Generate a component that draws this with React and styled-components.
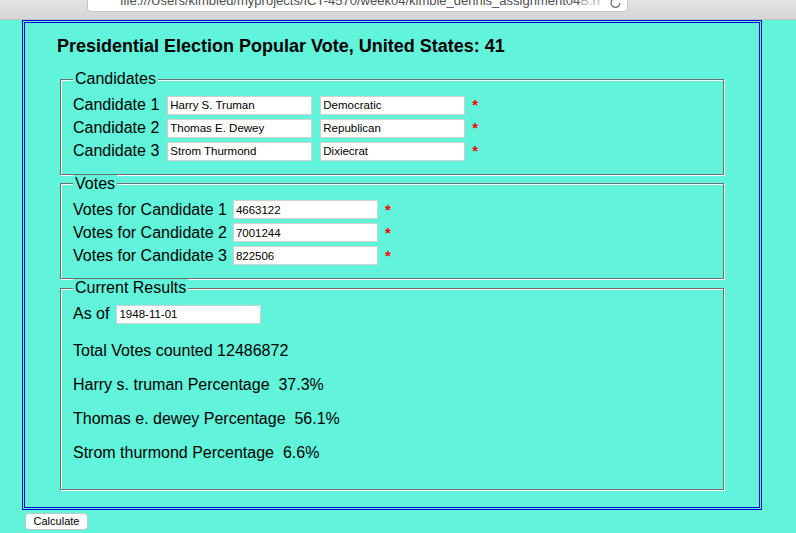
import React from 'react'
import styled, { createGlobalStyle } from 'styled-components'

const aqua = '#62f4da'

const GlobalStyle = createGlobalStyle`
  html, body {
    margin: 0;
    padding: 0;
    background: ${aqua};
  }
  body {
    font-family: "Liberation Sans", Arial, sans-serif;
    color: #000;
  }
`

const BrowserBar = styled.div`
  height: 19px;
  border-bottom: 1px solid #c2c2c2;
  background: linear-gradient(#e3e3e3, #d5d5d5);
  display: flex;
`

const UrlField = styled.div`
  margin-left: 87px;
  width: 541px;
  height: 12px;
  box-sizing: border-box;
  background: #fff;
  border: 1px solid #c6c6c6;
  border-top: none;
  border-radius: 0 0 4px 4px;
  overflow: hidden;
  display: flex;
  align-items: flex-end;
  padding: 0 5px 3px 32px;
  font-size: 13px;
  line-height: 14px;
  color: #4e4e4e;
  white-space: nowrap;
`

const UrlText = styled.span`
  flex: 1;
  overflow: hidden;
`

const Faded = styled.span`
  color: #b4b4b4;
`

const Reload = styled.svg`
  flex: none;
  width: 12px;
  height: 12px;
  margin: 0 0 -1px 0;
`

const Page = styled.div`
  padding: 0 0 0 22px;
`

const Frame = styled.div`
  width: 740px;
  box-sizing: border-box;
  border: 3px double #0000cd;
  padding: 0 33px 17px 33px;
`

const Title = styled.h1`
  margin: 13px 0 13px -1px;
  font-size: 18px;
  line-height: 21px;
  font-weight: bold;
`

const Group = styled.fieldset`
  margin: 0 2px;
  border: 1px solid #6e6e6e;
  box-shadow: inset 1px 1px 0 #fff, 1px 1px 0 #fff;
  padding: 5.6px 12px 11px;
  min-width: 0;
`

const Legend = styled.legend`
  padding: 0 2px;
  font-size: 16px;
  line-height: 18px;
  background: ${aqua};
`

const Row = styled.div`
  display: flex;
  align-items: center;
  height: 23px;
  font-size: 16px;
  line-height: 18px;
`

const Label = styled.span`
  margin-right: ${p => p.$gap || 7}px;
`

const Field = styled.input`
  width: 145px;
  height: 19px;
  box-sizing: border-box;
  margin: 0 ${p => p.$after || 0}px 0 0;
  padding: 0 2px;
  border: 1px solid #d0d0d0;
  background: #fff;
  color: #000;
  font: 11.5px "Liberation Sans", Arial, sans-serif;
  outline: none;
`

const Required = styled.span`
  margin-left: 7px;
  color: #ff0000;
  font-size: 15px;
  font-weight: bold;
`

const Stat = styled.p`
  margin: 16px 0;
  font-size: 16px;
  line-height: 18px;
  white-space: pre;
`

const CalcButton = styled.button`
  margin: 3px 0 0 3px;
  width: 63px;
  height: 17px;
  padding: 0;
  border: 1px solid #c4c4c4;
  border-radius: 4px;
  background: #fff;
  color: #000;
  font: 11px "Liberation Sans", Arial, sans-serif;
`

const candidates = [
  { name: 'Harry S. Truman', party: 'Democratic' },
  { name: 'Thomas E. Dewey', party: 'Republican' },
  { name: 'Strom Thurmond', party: 'Dixiecrat' },
]

const votes = ['4663122', '7001244', '822506']

const results = [
  'Total Votes counted 12486872',
  'Harry s. truman Percentage  37.3%',
  'Thomas e. dewey Percentage  56.1%',
  'Strom thurmond Percentage  6.6%',
]

const App = () => {
  return (
    <>
      <GlobalStyle />
      <BrowserBar>
        <UrlField>
          <UrlText>
            file:///Users/kimbled/myprojects/ICT-4570/week04/kimble_dennis_assignment04<Faded>B.h</Faded>
          </UrlText>
          <Reload viewBox="0 0 12 12">
            <path d="M10 6 A4.5 4.5 0 1 1 8.6 2.6" fill="none" stroke="#6a6a6a" strokeWidth="1.2" />
          </Reload>
        </UrlField>
      </BrowserBar>
      <Page>
        <Frame>
          <Title>Presidential Election Popular Vote, United States: 41</Title>

          <Group>
            <Legend>Candidates</Legend>
            {candidates.map((c, i) => (
              <Row key={c.name}>
                <Label $gap={8}>Candidate {i + 1}</Label>
                <Field defaultValue={c.name} $after={8} />
                <Field defaultValue={c.party} />
                <Required>*</Required>
              </Row>
            ))}
          </Group>

          <Group>
            <Legend>Votes</Legend>
            {votes.map((v, i) => (
              <Row key={v}>
                <Label $gap={6}>Votes for Candidate {i + 1}</Label>
                <Field defaultValue={v} />
                <Required>*</Required>
              </Row>
            ))}
          </Group>

          <Group>
            <Legend>Current Results</Legend>
            <Row>
              <Label>As of</Label>
              <Field defaultValue="1948-11-01" />
            </Row>
            {results.map(r => (
              <Stat key={r}>{r}</Stat>
            ))}
          </Group>
        </Frame>
        <CalcButton>Calculate</CalcButton>
      </Page>
    </>
  )
}

export default App
